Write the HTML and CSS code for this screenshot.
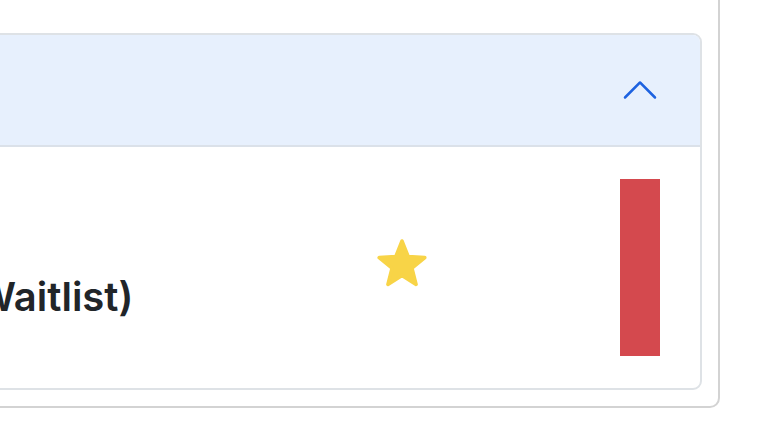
FILE: index.html
```html
<!DOCTYPE html>
<html lang="en">
<head>
<meta charset="utf-8">
<title>Registrations</title>
<link rel="stylesheet" href="styles.css">
</head>
<body>
<div class="viewport">
  <section class="card">
    <h2 class="card-title">My registrations</h2>
    <div class="accordion">
      <div class="acc-header">
        <span class="acc-title">Events</span>
        <svg class="chevron" viewBox="0 0 16 16" aria-hidden="true"><path d="M1.646 4.646a.5.5 0 0 1 .708 0L8 10.293l5.646-5.647a.5.5 0 0 1 .708.708l-6 6a.5.5 0 0 1-.708 0l-6-6a.5.5 0 0 1 0-.708z"/></svg>
      </div>
      <div class="acc-body">
        <div class="title-col">
          <div class="event-name">Spring Session (Waitlist)</div>
        </div>
        <svg class="star" viewBox="0 0 50 50" aria-hidden="true"><polygon points="25,2 31.17,17.51 47.82,18.58 34.99,29.24 39.11,45.42 25,36.5 10.89,45.42 15.01,29.24 2.18,18.58 18.83,17.51"/></svg>
        <div class="status-bar"></div>
      </div>
    </div>
  </section>
</div>
</body>
</html>
```
FILE: styles.css
```css
* { box-sizing: border-box; }
html, body { margin: 0; padding: 0; background: #ffffff; }
body { font-family: "Inter", "Liberation Sans", sans-serif; color: #212529; }

.viewport {
  width: 768px;
  height: 440px;
  overflow: hidden;
  display: flex;
  flex-direction: column;
  justify-content: flex-end;
  align-items: flex-end;
}

.card {
  flex-shrink: 0;
  width: 1120px;
  margin-right: 48px;
  margin-bottom: 32px;
  padding: 16px;
  border: 2px solid #d3d3d3;
  border-radius: 10px;
  background: #fff;
}

.card-title {
  margin: 0 0 48px;
  font-size: 32px;
  font-weight: 600;
}

.accordion {
  border: 2px solid #dee2e6;
  border-radius: 9px;
  overflow: hidden;
}

.acc-header {
  display: flex;
  align-items: center;
  justify-content: space-between;
  height: 112px;
  padding: 0 40px;
  background: #e7f0fd;
  border-bottom: 2px solid #dbe1e9;
  font-size: 32px;
  color: #0c63e4;
}

.chevron {
  width: 40px;
  height: 40px;
  fill: #1d62e0;
  transform: rotate(180deg);
}

.acc-body {
  display: flex;
  align-items: flex-start;
  padding: 32px 40px;
}

.title-col { flex: 1; min-width: 0; }

.event-name {
  margin-top: 94px;
  font-size: 40px;
  font-weight: 600;
  line-height: 48px;
  white-space: nowrap;
  color: #212529;
}

.star {
  width: 50px;
  height: 50px;
  margin-top: 60px;
  margin-right: 193px;
  fill: #f8d447;
  stroke: #f8d447;
  stroke-width: 3.5;
  stroke-linejoin: round;
}

.status-bar {
  width: 40px;
  height: 177px;
  background: #d4494e;
}
```
